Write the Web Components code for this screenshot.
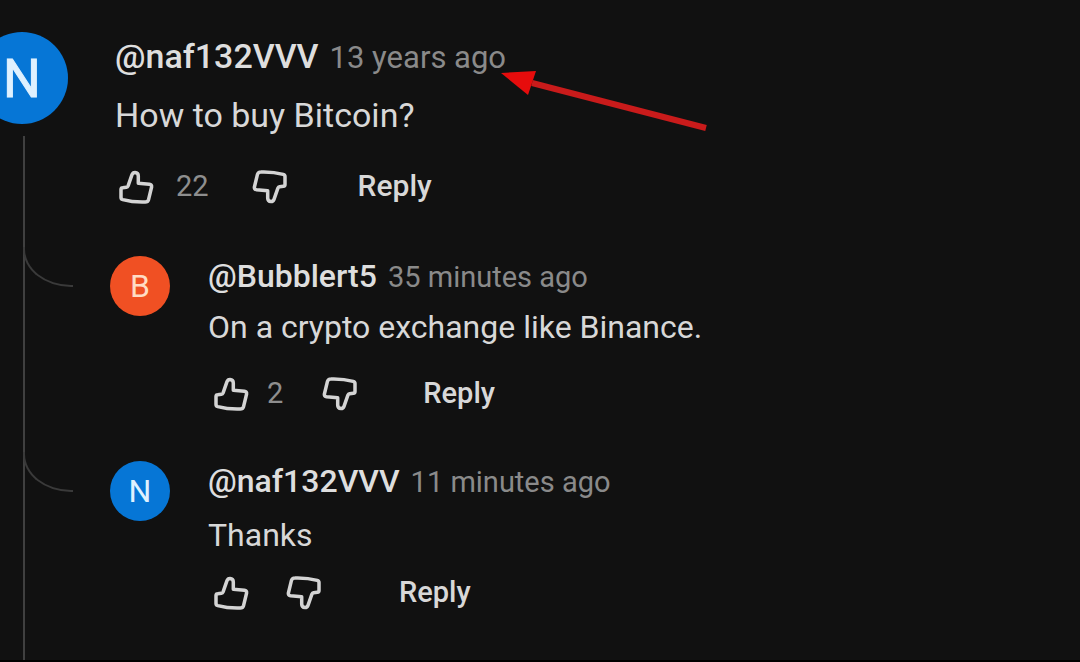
<!DOCTYPE html>
<html lang="en">
<head>
<meta charset="utf-8">
<meta name="viewport" content="width=device-width, initial-scale=1">
<title>Comments</title>
<style>
  html { background: #111; }
  body {
    margin: 0;
    min-height: 100vh;
    box-sizing: border-box;
    border-bottom: 2px solid #000;
    display: flex;
    position: relative;
    overflow-x: hidden;
    background: #111;
    color: #d8d8d8;
    font-family: Roboto, "Liberation Sans", sans-serif;
  }
</style>
</head>
<body>
<comment-thread>
  <user-avatar slot="avatar" size="large" letter="N" style="--fill:#0676d6"></user-avatar>
  <user-comment author="@naf132VVV" when="13 years ago" likes="22">How to buy Bitcoin?</user-comment>
  <thread-reply slot="replies">
    <user-avatar slot="avatar" letter="B" style="--fill:#f05023;--ink:#ffdcc4"></user-avatar>
    <user-comment size="small" author="@Bubblert5" when="35 minutes ago" likes="2">On a crypto exchange like Binance.</user-comment>
  </thread-reply>
  <thread-reply slot="replies">
    <user-avatar slot="avatar" letter="N" style="--fill:#0676d6"></user-avatar>
    <user-comment size="small" author="@naf132VVV" when="11 minutes ago">Thanks</user-comment>
  </thread-reply>
</comment-thread>
<pointer-arrow></pointer-arrow>

<script>
class UserAvatar extends HTMLElement {
  connectedCallback() {
    this.attachShadow({ mode: "open" }).innerHTML = `
      <style>
        :host {
          display: flex; align-items: center; justify-content: center;
          flex: none; width: 60px; height: 60px; border-radius: 50%;
          background: var(--fill); color: var(--ink, #dff1ff);
          font-size: 32px; line-height: 1;
        }
        :host([size="large"]) { width: 92px; height: 92px; font-size: 53px; }
        :host([size="large"]) span { padding-top: 2px; -webkit-text-stroke: 1px; }
      </style>
      <span>${this.getAttribute("letter")}</span>`;
  }
}

class ThumbIcon extends HTMLElement {
  connectedCallback() {
    this.attachShadow({ mode: "open" }).innerHTML = `
      <style>
        :host { display: block; width: 36px; height: 36px; }
        :host([down]) { transform: rotate(180deg); }
        svg { display: block; }
        path { fill: none; stroke: #d4d4d4; stroke-width: 3.5; stroke-linejoin: round; }
      </style>
      <svg width="36" height="36" viewBox="0 0 36 36" aria-hidden="true">
        <path d="M3 20.6Q3 19 4.6 18.8L8.4 18.2Q9.6 18 10.1 16.8L14 5.6Q14.8 3.4 17 3.4Q20.3 3.6 20.3 7V14.2L31.4 15.2Q34 15.6 33.6 18L30.6 30.4Q29.8 33 27.2 33Q15 33.4 4.8 30.6Q3 30 3 28.4Z"/>
      </svg>`;
  }
}

class UserComment extends HTMLElement {
  connectedCallback() {
    const likes = this.getAttribute("likes");
    this.attachShadow({ mode: "open" }).innerHTML = `
      <style>
        :host {
          display: block; min-width: 0;
          --name: 34px; --time: 31px; --text: 34px; --button: 30px;
          --text-gap: 17px; --actions-gap: 34px; --actions-inset: 3px;
          --count-gap: 22px; --dislike-gap: 43px; --reply-gap: 70px;
        }
        :host([size="small"]) {
          --name: 32px; --time: 29px; --text: 32px; --button: 29px;
          --text-gap: 10px; --actions-gap: 29px; --actions-inset: 5px;
          --count-gap: 18px; --dislike-gap: 39px; --reply-gap: 65px;
        }
        :host([size="small"]:not([likes])) {
          --text-gap: 13px; --actions-gap: 20px;
          --dislike-gap: 37px; --reply-gap: 77px;
        }
        header { display: flex; align-items: baseline; gap: 11px; line-height: 40px; white-space: nowrap; }
        .name { color: #dedede; font-size: var(--name); font-weight: 500; text-decoration: none; }
        time { color: #8a8a8a; font-size: var(--time); }
        p { margin: var(--text-gap) 0 0; font-size: var(--text); line-height: 40px; }
        .actions { display: flex; align-items: center; height: 36px; margin-top: var(--actions-gap); padding-left: var(--actions-inset); }
        button { padding: 0; border: 0; background: none; color: #d8d8d8; font: 500 var(--button)/36px Roboto, "Liberation Sans", sans-serif; cursor: pointer; }
        .count { margin-left: var(--count-gap); color: #8e8e8e; font-size: 29px; line-height: 36px; }
        .dislike { margin-left: var(--dislike-gap); }
        .reply { margin-left: var(--reply-gap); }
        .count, .reply { padding-bottom: 2px; }
      </style>
      <article>
        <header><a class="name" href="#">${this.getAttribute("author")}</a><time>${this.getAttribute("when")}</time></header>
        <p><slot></slot></p>
        <div class="actions">
          <button type="button" aria-label="Like"><thumb-icon></thumb-icon></button>
          ${likes ? `<span class="count">${likes}</span>` : ""}
          <button class="dislike" type="button" aria-label="Dislike"><thumb-icon down></thumb-icon></button>
          <button class="reply" type="button">Reply</button>
        </div>
      </article>`;
  }
}

class ThreadReply extends HTMLElement {
  connectedCallback() {
    this.attachShadow({ mode: "open" }).innerHTML = `
      <style>
        :host { display: flex; align-items: flex-start; }
        .elbow {
          flex: none; box-sizing: border-box; width: 50px; height: 40px;
          border: solid #3a3a3a; border-width: 0 0 2px 2px;
          border-bottom-left-radius: 48px 38px;
        }
        .avatar { margin: 9px 38px 0 37px; }
        .body { flex: 1; min-width: 0; padding-top: 9px; }
      </style>
      <div class="elbow"></div>
      <div class="avatar"><slot name="avatar"></slot></div>
      <div class="body"><slot></slot></div>`;
  }
}

class CommentThread extends HTMLElement {
  connectedCallback() {
    this.attachShadow({ mode: "open" }).innerHTML = `
      <style>
        :host {
          flex: 1; min-width: 0; display: grid;
          grid-template: auto 1fr / 68px 1fr;
          padding-top: 32px;
        }
        .rail { grid-area: 1 / 1 / -1 / 2; display: flex; flex-direction: column; align-items: flex-end; gap: 12px; }
        .line { flex: 1; width: 2px; margin-right: 43px; background: #404040; }
        .top { grid-area: 1 / 2; padding: 4px 0 0 47px; }
        .replies { grid-area: 2 / 1 / 3 / -1; display: flex; flex-direction: column; gap: 40px; padding: 42px 0 44px 23px; }
      </style>
      <div class="rail"><slot name="avatar"></slot><div class="line"></div></div>
      <div class="top"><slot></slot></div>
      <div class="replies"><slot name="replies"></slot></div>`;
  }
}

class PointerArrow extends HTMLElement {
  connectedCallback() {
    this.attachShadow({ mode: "open" }).innerHTML = `
      <style>
        :host { position: absolute; left: 500px; top: 68px; pointer-events: none; }
        svg { display: block; }
      </style>
      <svg width="212" height="68" viewBox="0 0 212 68" aria-hidden="true">
        <path d="M32 15L206 60" stroke="#c91b1b" stroke-width="6"/>
        <path d="M1 5L36 3L28 27Z" fill="#e60c0c"/>
      </svg>`;
  }
}

customElements.define("user-avatar", UserAvatar);
customElements.define("thumb-icon", ThumbIcon);
customElements.define("user-comment", UserComment);
customElements.define("thread-reply", ThreadReply);
customElements.define("comment-thread", CommentThread);
customElements.define("pointer-arrow", PointerArrow);
</script>
</body>
</html>
